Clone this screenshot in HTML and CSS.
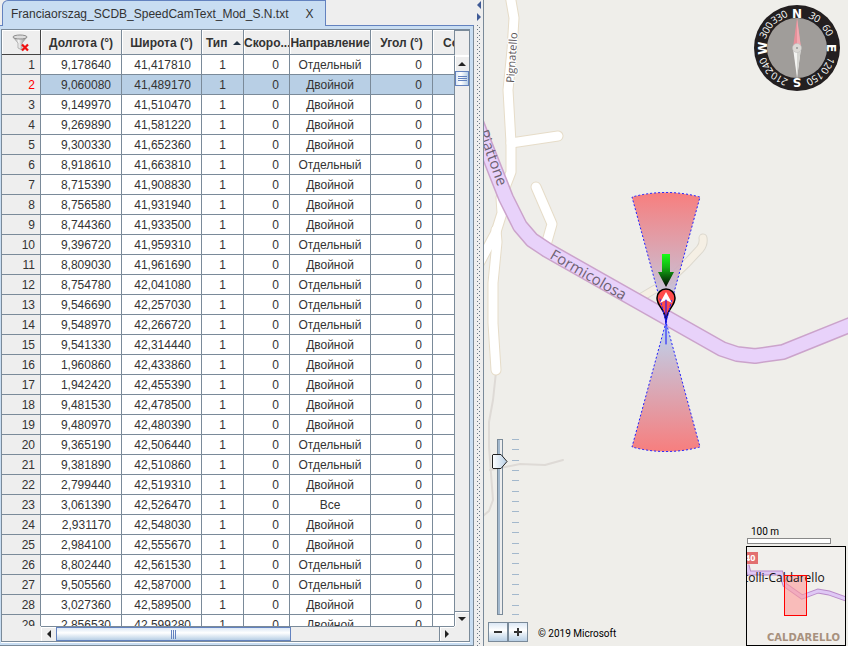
FILE: index.html
```
<!DOCTYPE html>
<html lang="ru">
<head>
    <meta charset="UTF-8">
    <meta name="viewport" content="width=device-width, initial-scale=1.0">
    <title>Franciaorszag_SCDB_SpeedCamText_Mod_S.N.txt</title>
    <link rel="stylesheet" href="styles.css">
</head>
<body>

<div class="app">

    <!-- File tab with the table -->
    <section class="editor">
        <div class="tabs">
            <div class="tab">
                <span>Franciaorszag_SCDB_SpeedCamText_Mod_S.N.txt</span>
                <button class="tab-close" aria-label="Close">X</button>
            </div>
        </div>
        <div class="tab-body">
            <div class="pane">
                <div class="viewport">
                    <table class="grid">
                        <colgroup>
                            <col class="c-num"><col class="c-lon"><col class="c-lat"><col class="c-type">
                            <col class="c-speed"><col class="c-dir"><col class="c-angle"><col>
                        </colgroup>
                        <thead>
                            <tr>
                                <th class="corner">
                                    <button class="filter" aria-label="Clear filter">
                                        <svg width="18" height="18" viewBox="0 0 18 18">
                                            <defs>
                                                <linearGradient id="metal">
                                                    <stop offset="0" stop-color="#8a8a8a"/>
                                                    <stop offset="0.4" stop-color="#f4f4f4"/>
                                                    <stop offset="1" stop-color="#777"/>
                                                </linearGradient>
                                            </defs>
                                            <path d="M1 3l5 6v5l4 2V9l5-6z" fill="url(#metal)" stroke="#999" stroke-width="0.7"/>
                                            <ellipse cx="8" cy="3" rx="7" ry="2" fill="#ddd" stroke="#8c8c8c"/>
                                            <path d="M10 10.500l6 6M16 10.500l-6 6" stroke="#f01010" stroke-width="2.200"/>
                                        </svg>
                                    </button>
                                </th>
                                <th>Долгота (°)</th>
                                <th>Широта (°)</th>
                                <th class="sorted">Тип <span class="sort-arrow"></span></th>
                                <th>Скоро...</th>
                                <th>Направление</th>
                                <th>Угол (°)</th>
                                <th class="cut">Со</th>
                            </tr>
                        </thead>
                        <tbody id="rows"></tbody>
                    </table>
                </div>
                <div class="vscroll">
                    <button class="scroll-btn" aria-label="Up"><span class="arrow up"></span></button>
                    <div class="thumb"></div>
                    <button class="scroll-btn last" aria-label="Down"><span class="arrow down"></span></button>
                </div>
                <div class="hscroll">
                    <button class="scroll-btn" aria-label="Left"><span class="arrow left"></span></button>
                    <div class="thumb"></div>
                    <button class="scroll-btn last" aria-label="Right"><span class="arrow right"></span></button>
                </div>
                <div class="scroll-corner"></div>
            </div>
        </div>
    </section>

    <div class="divider">
        <span class="collapse-left"></span>
        <span class="collapse-right"></span>
        <div class="grip"></div>
    </div>

    <!-- Map -->
    <section class="map">
        <svg class="map-canvas" viewBox="484 0 364 646" preserveAspectRatio="xMinYMin slice">
            <defs>
                <linearGradient id="coneUp" x1="0" y1="0" x2="0" y2="1">
                    <stop offset="0" stop-color="#f87272"/>
                    <stop offset="1" stop-color="#b4d4f4"/>
                </linearGradient>
                <linearGradient id="coneDown" x1="0" y1="1" x2="0" y2="0">
                    <stop offset="0" stop-color="#f87272"/>
                    <stop offset="1" stop-color="#b4d4f4"/>
                </linearGradient>
                <linearGradient id="green" x1="0" y1="0" x2="0" y2="1">
                    <stop offset="0" stop-color="#18ff18"/>
                    <stop offset="0.400" stop-color="#14b414"/>
                    <stop offset="1" stop-color="#000"/>
                </linearGradient>
            </defs>

            <!-- footpaths -->
            <g class="path">
                <path d="M496 372L493 400L489 422L489 447L493 500L489 511L483 516"/>
                <path d="M490 470L500 468L520 464L545 465L563 460"/>
            </g>

            <!-- side roads: edge first, fill on top -->
            <g class="road-edge">
                <path d="M510 -5L514 18L512 50L508 90L511 143L511 172L501 198L502 213L496 232L480 262"/>
                <path d="M496 230L497 242L493 283L493 323L496 370"/>
                <path d="M511 143L558 136"/>
                <path d="M536 187L552 224L546 245"/>
            </g>
            <g class="road-fill">
                <path d="M510 -5L514 18L512 50L508 90L511 143L511 172L501 198L502 213L496 232L480 262"/>
                <path d="M496 230L497 242L493 283L493 323L496 370"/>
                <path d="M511 143L558 136"/>
                <path d="M536 187L552 224L546 245"/>
            </g>
            <path class="lane-edge" d="M703 238Q704 244 700 249L686 264L667 282L640 298"/>
            <path class="lane-fill" d="M703 238Q704 244 700 249L686 264L667 282L640 298"/>

            <!-- main road -->
            <path class="main-edge" d="M472 112L506 198L520 226L532 240L547 250L722 349L737 354L755 356L783 352L860 321"/>
            <path class="main-fill" d="M472 112L506 198L520 226L532 240L547 250L722 349L737 354L755 356L783 352L860 321"/>

            <text class="street" x="514" y="83" transform="rotate(-86 514 83)">Pignatello</text>
            <text class="street big" x="478" y="132" transform="rotate(70 478 132)">Piattone</text>
            <text class="street big" x="549" y="258" transform="rotate(30 549 258)">Formicolosa</text>

            <!-- camera zone -->
            <g class="cone">
                <path d="M666 322L632 197A130 130 0 0 1 700 197Z" fill="url(#coneUp)"/>
                <path d="M666 322L632 447A130 130 0 0 0 700 447Z" fill="url(#coneDown)"/>
            </g>
            <path d="M666 322C666 309 657 307 657 298A9 9 0 0 1 675 298C675 307 666 309 666 322Z" fill="#ff4b4b" stroke="#000" stroke-width="1.500"/>
            <path d="M660 299L666 322L672 299" fill="none" stroke="#22f" stroke-dasharray="2 2"/>
            <path d="M666 292L672 303L666 300L660 303Z" fill="#fff"/>
            <path d="M666 300V344" stroke="#11f"/>
            <path d="M662 254H670V272H674L666 287L658 272H662Z" fill="url(#green)"/>
        </svg>

        <svg class="compass" width="86" height="88" viewBox="-43 -43 86 88">
            <circle r="43" fill="#231f20"/>
            <circle r="30" fill="#a09d9a"/>
            <g class="degrees">
                <text y="-32" transform="rotate(30)">30</text>
                <text y="-32" transform="rotate(60)">60</text>
                <text y="-32" transform="rotate(120)">120</text>
                <text y="-32" transform="rotate(150)">150</text>
                <text y="-32" transform="rotate(210)">210</text>
                <text y="-32" transform="rotate(240)">240</text>
                <text y="-32" transform="rotate(300)">300</text>
                <text y="-32" transform="rotate(330)">330</text>
            </g>
            <g class="cardinals">
                <text y="-30">N</text>
                <text y="-30" transform="rotate(90)">E</text>
                <text y="-30" transform="rotate(180)">S</text>
                <text y="-30" transform="rotate(270)">W</text>
            </g>
            <path d="M0 -30L4 0H-4Z" fill="#e8909a"/>
            <path d="M0 -30L4 0H0Z" fill="#f2a8b0"/>
            <path d="M0 30L4 0H-4Z" fill="#f4f4f2"/>
            <path d="M0 30L4 0H0Z" fill="#d6d6d2"/>
            <circle r="4.500" fill="#dcdad6" stroke="#bbb" stroke-width="0.500"/>
            <circle r="1" fill="#999"/>
        </svg>

        <div class="map-tools">
            <div class="zoom">
                <div class="zoom-slider">
                    <input type="range" min="0" max="100" value="91" aria-label="Zoom">
                    <svg width="7" height="176" viewBox="0 0 7 176">
                        <path d="M0 .5h7m-7 10h7m-7 11h7m-7 10h7m-7 10h7m-7 11h7m-7 10h7m-7 10h7m-7 11h7m-7 10h7m-7 11h7m-7 10h7m-7 10h7m-7 11h7m-7 10h7m-7 10h7m-7 11h7m-7 9h7" stroke="#a3b8cc"/>
                    </svg>
                </div>
                <div class="zoom-row">
                    <button class="zoom-btn" aria-label="Zoom out">
                        <svg width="10" height="10"><path d="M1 5H9" stroke="#333" stroke-width="2"/></svg>
                    </button>
                    <button class="zoom-btn" aria-label="Zoom in">
                        <svg width="10" height="10"><path d="M1 5H9M5 1V9" stroke="#333" stroke-width="2"/></svg>
                    </button>
                    <span class="copyright">© 2019 Microsoft</span>
                </div>
            </div>

            <div class="overview">
                <div class="scale-text">100 m</div>
                <div class="scale-bar"></div>
                <svg class="minimap" viewBox="0 0 98 98">
                    <path d="M0 18L2 26L34 26L38 38L55 50L71 44L82 46L99 52" fill="none" stroke="#b98bc9" stroke-width="5"/>
                    <path d="M0 18L2 26L34 26L38 38L55 50L71 44L82 46L99 52" fill="none" stroke="#dfc8f5" stroke-width="3"/>
                    <rect x="-3" y="5" width="14" height="12" fill="#e26f70"/>
                    <text class="mini-sign" x="-2" y="14">40</text>
                    <rect x="38" y="29" width="22" height="39" fill="#ff9a9a" fill-opacity="0.600"/>
                    <text class="mini-name" x="-3" y="35">tolli-Caldarello</text>
                    <rect x="37.500" y="28.500" width="22" height="40" fill="none" stroke="#f00"/>
                    <text class="mini-town" x="20" y="94">CALDARELLO</text>
                </svg>
            </div>
        </div>
    </section>

</div>

<script>
    const S = 'Отдельный';
    const D = 'Двойной';
    const selected = 2;

    const cameras = [
        ['9,178640', '41,417810', S], ['9,060080', '41,489170', D], ['9,149970', '41,510470', D],
        ['9,269890', '41,581220', D], ['9,300330', '41,652360', D], ['8,918610', '41,663810', S],
        ['8,715390', '41,908830', D], ['8,756580', '41,931940', D], ['8,744360', '41,933500', D],
        ['9,396720', '41,959310', S], ['8,809030', '41,961690', D], ['8,754780', '42,041080', S],
        ['9,546690', '42,257030', S], ['9,548970', '42,266720', S], ['9,541330', '42,314440', D],
        ['1,960860', '42,433860', D], ['1,942420', '42,455390', D], ['9,481530', '42,478500', D],
        ['9,480970', '42,480390', D], ['9,365190', '42,506440', S], ['9,381890', '42,510860', S],
        ['2,799440', '42,519310', D], ['3,061390', '42,526470', 'Все'], ['2,931170', '42,548030', D],
        ['2,984100', '42,555670', D], ['8,802440', '42,561530', S], ['9,505560', '42,587000', S],
        ['3,027360', '42,589500', D], ['2,856530', '42,599280', D]
    ];

    document.getElementById('rows').innerHTML = cameras.map(function(cam, i) {
        const num = i + 1;
        return `<tr${num === selected ? ' class="selected"' : ''}>
            <th scope="row">${num}</th><td>${cam[0]}</td><td>${cam[1]}</td>
            <td class="center">1</td><td>0</td><td class="center">${cam[2]}</td><td>0</td><td></td>
        </tr>`;
    }).join('');
</script>

</body>
</html>
```
FILE: styles.css
```
* {
    box-sizing: border-box;
}

body {
    margin: 0;
    font-family: 'Liberation Sans', Arial, sans-serif;
    font-size: 12px;
    color: #333;
    background-color: #fff;
}

button {
    padding: 0;
    border: none;
    background: none;
    font: inherit;
    color: inherit;
}

.app {
    display: flex;
    height: 100vh;
    padding-bottom: 2px;
    overflow: hidden;
}

/* Editor */
.editor {
    display: flex;
    flex-direction: column;
    flex: 0 0 474px;
    background-color: #eee;
}

.tabs {
    display: flex;
    height: 26px;
    padding-left: 2px;
    border-bottom: 1px solid #6382bf;
}

.tab {
    display: flex;
    align-items: center;
    gap: 17px;
    height: 26px;
    padding: 0 12px 0 8px;
    background-color: #c8ddf2;
    border: 1px solid #6382bf;
    border-bottom: none;
    border-top-left-radius: 6px;
}

.tab-body {
    display: flex;
    flex: 1;
    min-height: 0;
    padding: 3px 3px 3px 1px;
    background-color: #c8ddf2;
    border-right: 1px solid #7a8a99;
    border-bottom: 1px solid #7a8a99;
}

.pane {
    display: grid;
    flex: 1;
    grid-template-columns: 39px 1fr 15px;
    grid-template-rows: 25px 1fr 15px;
    min-width: 0;
    background-color: #eee;
    border: 1px solid #7a8a99;
    box-shadow: 0 1px 0 #fff;
}

.viewport {
    grid-column: 1 / 3;
    grid-row: 1 / 3;
    min-height: 0;
    overflow: hidden;
}

.grid {
    width: 100%;
    table-layout: fixed;
    border-collapse: separate;
    border-spacing: 0;
}

.c-num { width: 39px; }
.c-lon { width: 81px; }
.c-lat { width: 80px; }
.c-type { width: 42px; }
.c-speed { width: 46px; }
.c-dir { width: 81px; }
.c-angle { width: 62px; }

.grid th,
.grid td {
    height: 20px;
    padding: 2px 10px 0 0;
    line-height: 17px;
    text-align: right;
    font-weight: normal;
    white-space: nowrap;
    overflow: hidden;
    background-color: #fff;
    border-right: 1px solid #7a8a99;
    border-bottom: 1px solid #7a8a99;
}

.grid td:last-child {
    border-right: none;
}

.grid td.center {
    padding-right: 0;
    text-align: center;
}

.grid thead th {
    height: 25px;
    padding: 2px 0 0;
    text-align: center;
    font-weight: bold;
    background-color: #eee;
    box-shadow: inset 1px 1px 0 #fff;
}

.grid thead .corner {
    border-color: #444;
}

.grid thead .sorted {
    padding-left: 4px;
    text-align: left;
}

.grid thead .cut {
    padding-left: 10px;
    text-align: left;
    border-right: none;
}

.grid tbody th {
    padding-right: 5px;
    background-color: #eee;
}

.grid .selected th {
    color: #f00;
}

.grid .selected td {
    background-color: #b8cfe5;
}

.filter {
    display: block;
    height: 18px;
    margin: 0 auto;
}

.sort-arrow {
    display: inline-block;
    margin-left: 2px;
    vertical-align: middle;
    border: 4px solid transparent;
    border-top: none;
    border-bottom-color: #234;
}

/* Scroll bars */
.vscroll {
    grid-column: 3;
    grid-row: 2;
    display: flex;
    flex-direction: column;
    border-left: 1px solid #7a8a99;
    border-top: 1px solid #fff;
}

.hscroll {
    grid-column: 2;
    grid-row: 3;
    display: flex;
    border-top: 1px solid #7a8a99;
}

.scroll-corner {
    border-top: 1px solid #7a8a99;
    border-left: 1px solid #7a8a99;
}

.scroll-btn {
    display: flex;
    align-items: center;
    justify-content: center;
    flex: 0 0 15px;
    background-color: #eee;
    box-shadow: inset 1px 1px 0 #fff;
}

.vscroll .last {
    margin-top: auto;
    border-top: 1px solid #7a8a99;
}

.hscroll .last {
    margin-left: auto;
    border-left: 1px solid #7a8a99;
}

.arrow {
    border: 4px solid transparent;
}

.arrow.up {
    border-top: none;
    border-bottom-color: #222;
}

.arrow.down {
    border-bottom: none;
    border-top-color: #222;
}

.arrow.left {
    border-left: none;
    border-right-color: #222;
}

.arrow.right {
    border-right: none;
    border-left-color: #222;
}

.thumb {
    display: flex;
    align-items: center;
    justify-content: center;
    border: 1px solid #6382bf;
}

.thumb::after {
    content: '';
}

.vscroll .thumb {
    height: 15px;
    background: linear-gradient(to right, #dce8f5, #fff 40%, #b8cfe5);
}

.vscroll .thumb::after {
    width: 9px;
    height: 5px;
    background: repeating-linear-gradient(to bottom, #6382bf 0 1px, transparent 1px 2px);
}

.hscroll .thumb {
    width: 57%;
    background: linear-gradient(to bottom, #dce8f5, #fff 40%, #b8cfe5);
}

.hscroll .thumb::after {
    width: 5px;
    height: 9px;
    background: repeating-linear-gradient(to right, #6382bf 0 1px, transparent 1px 2px);
}

/* Divider */
.divider {
    display: flex;
    flex-direction: column;
    flex: 0 0 10px;
    align-items: center;
    gap: 4px;
    background-color: #eee;
    border-right: 1px solid #7a8a99;
}

.collapse-left,
.collapse-right {
    border: 4px solid transparent;
}

.collapse-left {
    margin-top: 1px;
    border-left: none;
    border-right-color: #3f5a96;
}

.collapse-right {
    border-right: none;
    border-left-color: #3f5a96;
}

.grip {
    flex: 1;
    width: 4px;
    background-image:
        conic-gradient(at 1px 1px, transparent 75%, #6b7885 0),
        conic-gradient(at 1px 1px, transparent 75%, #6b7885 0);
    background-size: 4px 4px;
    background-position: 0 0, 2px 2px;
}

/* Map */
.map {
    position: relative;
    display: flex;
    flex: 1;
    min-width: 0;
    background-color: #efeeea;
    overflow: hidden;
}

.map-canvas {
    position: absolute;
    width: 100%;
    height: 100%;
}

.map-canvas path {
    stroke-linejoin: round;
    stroke-linecap: round;
}

.path path {
    fill: none;
    stroke: #dedad6;
    stroke-width: 2;
}

.road-edge path {
    fill: none;
    stroke: #e6dcc8;
    stroke-width: 11;
}

.road-fill path {
    fill: none;
    stroke: #fff;
    stroke-width: 9;
}

.lane-edge {
    fill: none;
    stroke: #dcd8ce;
    stroke-width: 9;
}

.lane-fill {
    fill: none;
    stroke: #f5efe4;
    stroke-width: 7;
}

.main-edge {
    fill: none;
    stroke: #cba3cb;
    stroke-width: 16;
}

.main-fill {
    fill: none;
    stroke: #e8d2fa;
    stroke-width: 13;
}

.street {
    font-family: 'Open Sans', sans-serif;
    font-size: 11px;
    fill: #5a5558;
    stroke: #fff;
    stroke-width: 2px;
    paint-order: stroke;
}

.street.big {
    font-size: 15px;
    font-weight: 500;
    fill: #6c6070;
    stroke: none;
}

.cone path {
    fill-opacity: 0.9;
    stroke: #22f;
    stroke-width: 1px;
    stroke-dasharray: 2 2;
    stroke-linecap: butt;
}

.compass {
    position: absolute;
    top: 5px;
    right: 8px;
}

.compass text {
    fill: #fff;
    text-anchor: middle;
}

.degrees {
    font-family: 'Open Sans', sans-serif;
    font-size: 10px;
}

.cardinals {
    font-family: 'DejaVu Sans', sans-serif;
    font-size: 12px;
    font-weight: bold;
}

.map-tools {
    position: absolute;
    left: 4px;
    right: 2px;
    bottom: 0;
    display: flex;
    align-items: flex-end;
    justify-content: space-between;
}

.zoom {
    padding-bottom: 4px;
}

.zoom-slider {
    display: flex;
    gap: 4px;
    margin: 0 0 7px 4px;
}

.zoom-slider input {
    appearance: none;
    writing-mode: vertical-lr;
    direction: rtl;
    width: 16px;
    height: 176px;
    margin: 0;
    background: none;
}

.zoom-slider input::-webkit-slider-runnable-track {
    width: 6px;
    background: linear-gradient(to right, #a3b8cc, #a3b8cc 2px, #eee 2px);
    border: 1px solid #7a8a99;
}

.zoom-slider input::-webkit-slider-thumb {
    appearance: none;
    width: 16px;
    height: 15px;
    margin-left: -6px;
    background: url("data:image/svg+xml,%3Csvg xmlns='http://www.w3.org/2000/svg' width='16' height='15'%3E%3ClinearGradient id='g'%3E%3Cstop stop-color='%23fff'/%3E%3Cstop offset='1' stop-color='%23b8cfe5'/%3E%3C/linearGradient%3E%3Cpath d='M1 .5H9L15 7.5L9 14.5H1L.5 14V1Z' fill='url(%23g)' stroke='%23222'/%3E%3C/svg%3E");
}

.zoom-row {
    display: flex;
    align-items: center;
}

.zoom-btn {
    display: flex;
    align-items: center;
    justify-content: center;
    width: 20px;
    height: 20px;
    background: linear-gradient(#dce8f5, #fff 40%, #b8cfe5);
    border: 1px solid #7a8a99;
}

.copyright {
    margin: 4px 0 0 10px;
    font-family: Roboto, sans-serif;
    font-size: 10px;
    line-height: 16px;
    color: #000;
}

.overview {
    width: 100px;
}

.scale-text {
    padding-left: 5px;
    font-family: Roboto, sans-serif;
    font-size: 10px;
    line-height: 13px;
    color: #000;
}

.scale-bar {
    width: 84px;
    height: 6px;
    margin: 0 0 2px 1px;
    background-color: #fff;
    border: 1px solid #888;
}

.minimap {
    display: block;
    width: 100px;
    height: 100px;
    background-color: #f1efec;
    border: 1px solid #000;
}

.minimap text {
    font-family: 'Open Sans', sans-serif;
}

.mini-sign {
    font-size: 9px;
    font-weight: bold;
    fill: #fff;
}

.mini-name {
    font-size: 12px;
    fill: #111;
}

.minimap .mini-town {
    font-family: 'DejaVu Sans', sans-serif;
    font-size: 10px;
    font-weight: bold;
    fill: #a8917e;
}
```
